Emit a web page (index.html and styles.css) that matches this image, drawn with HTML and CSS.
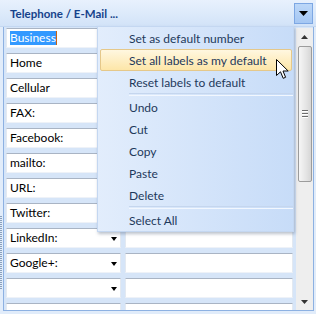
FILE: index.html
```html
<!DOCTYPE html>
<html>
<head>
<meta charset="utf-8">
<link rel="stylesheet" href="styles.css">
</head>
<body>
<div class="frame">
  <div class="header">
    <span class="title">Telephone / E-Mail ...</span>
    <span class="hdr-btn"><svg width="9" height="5" viewBox="0 0 9 5"><path d="M0 0H9L4.5 5Z" fill="#000"/></svg></span>
  </div>
  <div class="panel">
    <div class="rows">
      <div class="row"><div class="field label"><span class="txt"><span class="sel">Business</span><span class="caret"></span></span><i class="arr"></i></div><div class="field"></div></div>
      <div class="row"><div class="field label"><span class="txt">Home</span><i class="arr"></i></div><div class="field"></div></div>
      <div class="row"><div class="field label"><span class="txt">Cellular</span><i class="arr"></i></div><div class="field"></div></div>
      <div class="row"><div class="field label"><span class="txt">FAX:</span><i class="arr"></i></div><div class="field"></div></div>
      <div class="row"><div class="field label"><span class="txt">Facebook:</span><i class="arr"></i></div><div class="field"></div></div>
      <div class="row"><div class="field label"><span class="txt">mailto:</span><i class="arr"></i></div><div class="field"></div></div>
      <div class="row"><div class="field label"><span class="txt">URL:</span><i class="arr"></i></div><div class="field"></div></div>
      <div class="row"><div class="field label"><span class="txt">Twitter:</span><i class="arr"></i></div><div class="field"></div></div>
      <div class="row"><div class="field label"><span class="txt">LinkedIn:</span><i class="arr"></i></div><div class="field"></div></div>
      <div class="row"><div class="field label"><span class="txt">Google+:</span><i class="arr"></i></div><div class="field"></div></div>
      <div class="row"><div class="field label"><span class="txt"></span><i class="arr"></i></div><div class="field"></div></div>
      <div class="row"><div class="field label"><span class="txt"></span><i class="arr"></i></div><div class="field"></div></div>
    </div>
    <div class="scrollbar">
      <div class="sb-btn"><svg width="7" height="4" viewBox="0 0 7 4"><path d="M0 4H7L3.5 0Z" fill="#333"/></svg></div>
      <div class="thumb"><span class="grip-lines"><i></i><i></i><i></i></span></div>
      <div class="track"></div>
      <div class="sb-btn"><svg width="7" height="4" viewBox="0 0 7 4"><path d="M0 0H7L3.5 4Z" fill="#333"/></svg></div>
    </div>
  </div>
  <div class="splitter"></div>
  <div class="menu">
    <div class="item">Set as default number</div>
    <div class="item hot">Set all labels as my default</div>
    <div class="item">Reset labels to default</div>
    <div class="sep"></div>
    <div class="item">Undo</div>
    <div class="item">Cut</div>
    <div class="item">Copy</div>
    <div class="item">Paste</div>
    <div class="item">Delete</div>
    <div class="sep"></div>
    <div class="item">Select All</div>
  </div>
  <svg class="cursor" width="13" height="21" viewBox="0 0 13 21"><path d="M0.5 0.5V16.5L4.5 12.8L7.2 19.3L9.6 18.3L7 12H12.2Z" fill="#fff" stroke="#000" stroke-width="1" stroke-linejoin="miter"/></svg>
</div>
</body>
</html>
```

FILE: styles.css
```css
* { box-sizing: border-box; margin: 0; padding: 0; }
body {
  margin: 0;
  width: 316px;
  height: 314px;
  overflow: hidden;
  font-family: Lato, "Noto Sans", sans-serif;
  font-size: 12px;
  background: #e1ecfa;
}
.frame {
  position: relative;
  width: 316px;
  height: 314px;
  background: #e1ecfa;
  display: flex;
  flex-direction: column;
  overflow: hidden;
}
.header {
  height: 27px;
  flex: none;
  display: flex;
  align-items: center;
  justify-content: space-between;
  padding: 0 3px 0 10px;
  background: linear-gradient(#e8f1fd, #d2e3f8);
  border-bottom: 1px solid #c3d7f1;
}
.title {
  font-weight: bold;
  color: #15428b;
  font-size: 11.5px;
}
.hdr-btn {
  width: 19px;
  height: 21px;
  display: flex;
  align-items: center;
  justify-content: center;
  background: linear-gradient(#bcd7f8, #a5c7f3);
  border: 1px solid #7da7e3;
}
.panel {
  flex: 1;
  margin: 0 2px 3px 3px;
  border: 1px solid #8db1e2;
  border-top: none;
  background: #d6e5f8;
  display: flex;
  gap: 3px;
  padding: 1px 0 0 2px;
  overflow: hidden;
}
.rows {
  width: 287px;
  flex: none;
  display: flex;
  flex-direction: column;
  gap: 5px;
}
.row {
  flex: none;
  display: grid;
  grid-template-columns: 115px 168px;
  gap: 4px;
}
.field {
  height: 20px;
  background: #fff;
  border: 1px solid;
  border-color: #a9b4c4 #e3e9f1 #eef2f8 #e3e9f1;
}
.label {
  display: flex;
  align-items: center;
  justify-content: space-between;
  padding: 0 3px 0 3px;
  color: #000;
}
.txt {
  display: flex;
  align-items: center;
  line-height: 16px;
}
.sel {
  background: #3399ff;
  color: #fff;
  line-height: 14px;
}
.caret {
  width: 1px;
  height: 14px;
  background: #c86414;
}
.arr {
  width: 0;
  height: 0;
  border-left: 3.5px solid transparent;
  border-right: 3.5px solid transparent;
  border-top: 4px solid #000;
  margin-top: 1px;
}
.scrollbar {
  width: 17px;
  flex: none;
  background: #eeeeee;
  display: flex;
  flex-direction: column;
  align-items: center;
}
.sb-btn {
  width: 17px;
  height: 17px;
  flex: none;
  display: flex;
  align-items: center;
  justify-content: center;
}
.thumb {
  width: 14px;
  height: 136px;
  margin-top: 1px;
  flex: none;
  border: 1px solid #9c9c9c;
  border-radius: 2px;
  background: linear-gradient(90deg, #f6f6f6, #e4e4e4 60%, #d6d6d6);
  display: flex;
  align-items: center;
  justify-content: center;
}
.grip-lines {
  display: flex;
  flex-direction: column;
  gap: 1px;
}
.grip-lines i {
  display: block;
  width: 6px;
  height: 1px;
  background: #6c6c6c;
  box-shadow: 0 1px 0 #fff;
  margin-bottom: 1px;
}
.track { flex: 1; }
.splitter {
  position: absolute;
  left: 0;
  top: 216px;
  width: 2px;
  height: 74px;
  background: repeating-linear-gradient(#8aa0bd 0 1px, transparent 1px 2px);
}
.menu {
  position: absolute;
  left: 97px;
  top: 26px;
  width: 197px;
  height: 206px;
  border: 1px solid #c4d7f1;
  background: linear-gradient(90deg, #e2edfc, #c7dcf8);
  box-shadow: 1px 2px 3px rgba(60, 80, 110, 0.35);
  display: flex;
  flex-direction: column;
  color: #1e395b;
}
.item {
  height: 22px;
  flex: none;
  display: flex;
  align-items: center;
  padding-left: 28px;
  margin: 0 1px 0 2px;
  border: 1px solid transparent;
  border-radius: 2px;
}
.item.hot {
  border-color: #e5c88a;
  background: linear-gradient(#fff7e0, #fde6a8);
}
.sep {
  height: 3px;
  flex: none;
  margin-left: 31px;
  border-top: 1px solid #c5d6ee;
  border-bottom: 1px solid #f2f7fe;
}
.cursor {
  position: absolute;
  left: 276px;
  top: 59px;
}
```
